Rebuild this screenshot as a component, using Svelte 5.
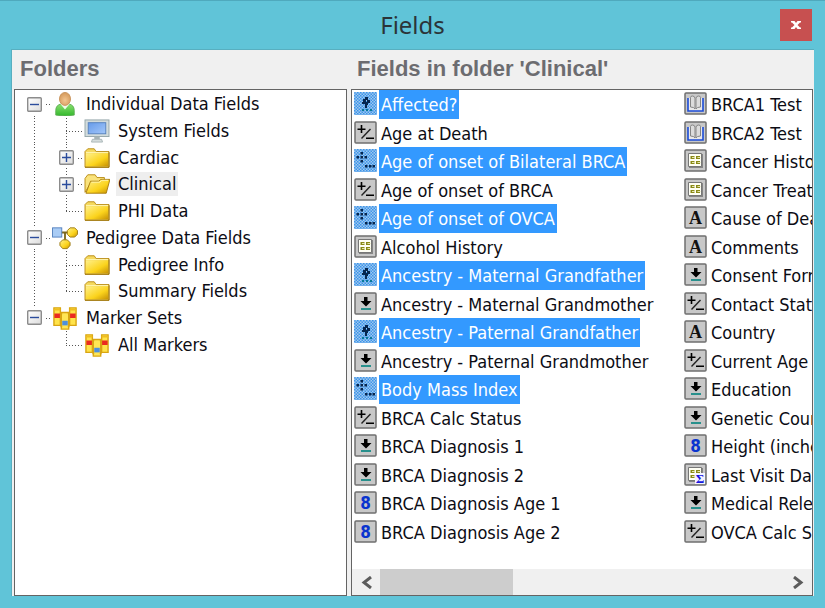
<script lang="ts">
  type TreeIcon = 'person' | 'monitor' | 'folder' | 'open' | 'pedigree' | 'markers';
  type FieldIcon = 'list' | 'calc' | 'number' | 'table' | 'text' | 'book' | 'summary';

  interface Node {
    name: string;
    icon: TreeIcon;
    expandable?: boolean;
    children?: Node[];
  }

  interface Field {
    name: string;
    icon: FieldIcon;
    selected?: boolean;
  }

  const folders: Node[] = [
    {
      name: 'Individual Data Fields',
      icon: 'person',
      children: [
        { name: 'System Fields', icon: 'monitor' },
        { name: 'Cardiac', icon: 'folder', expandable: true },
        { name: 'Clinical', icon: 'open', expandable: true },
        { name: 'PHI Data', icon: 'folder' },
      ],
    },
    {
      name: 'Pedigree Data Fields',
      icon: 'pedigree',
      children: [
        { name: 'Pedigree Info', icon: 'folder' },
        { name: 'Summary Fields', icon: 'folder' },
      ],
    },
    {
      name: 'Marker Sets',
      icon: 'markers',
      children: [{ name: 'All Markers', icon: 'markers' }],
    },
  ];

  let fields: Field[] = $state([
    { name: 'Affected?', icon: 'list', selected: true },
    { name: 'Age at Death', icon: 'calc' },
    { name: 'Age of onset of Bilateral BRCA', icon: 'calc', selected: true },
    { name: 'Age of onset of BRCA', icon: 'calc' },
    { name: 'Age of onset of OVCA', icon: 'calc', selected: true },
    { name: 'Alcohol History', icon: 'table' },
    { name: 'Ancestry - Maternal Grandfather', icon: 'list', selected: true },
    { name: 'Ancestry - Maternal Grandmother', icon: 'list' },
    { name: 'Ancestry - Paternal Grandfather', icon: 'list', selected: true },
    { name: 'Ancestry - Paternal Grandmother', icon: 'list' },
    { name: 'Body Mass Index', icon: 'calc', selected: true },
    { name: 'BRCA Calc Status', icon: 'calc' },
    { name: 'BRCA Diagnosis 1', icon: 'list' },
    { name: 'BRCA Diagnosis 2', icon: 'list' },
    { name: 'BRCA Diagnosis Age 1', icon: 'number' },
    { name: 'BRCA Diagnosis Age 2', icon: 'number' },
    { name: 'BRCA1 Test', icon: 'book' },
    { name: 'BRCA2 Test', icon: 'book' },
    { name: 'Cancer History', icon: 'table' },
    { name: 'Cancer Treatment', icon: 'table' },
    { name: 'Cause of Death', icon: 'text' },
    { name: 'Comments', icon: 'text' },
    { name: 'Consent Form', icon: 'list' },
    { name: 'Contact Status', icon: 'calc' },
    { name: 'Country', icon: 'text' },
    { name: 'Current Age', icon: 'calc' },
    { name: 'Education', icon: 'list' },
    { name: 'Genetic Counseling', icon: 'list' },
    { name: 'Height (inches)', icon: 'number' },
    { name: 'Last Visit Date', icon: 'summary' },
    { name: 'Medical Release', icon: 'list' },
    { name: 'OVCA Calc Status', icon: 'calc' },
  ]);

  let current = $state('Clinical');
  let list: HTMLElement;

  const scroll = (left: number) => list.scrollBy({ left });
</script>

{#snippet treeIcon(name: TreeIcon)}
  <svg class="tree-icon" viewBox="0 0 28 26" aria-hidden="true">
    {#if name === 'person'}
      <path d="M4 25v-5q0-6 6-7h8q6 1 6 7v5q-10 2-20 0z" fill="url(#green)" stroke="#5cae52" />
      <path d="M9 13l5 6 5-6z" fill="#eefbe8" />
      <ellipse cx="14" cy="7.500" rx="6" ry="7" fill="url(#skin)" stroke="#c9935a" />
    {:else if name === 'monitor'}
      <rect x="1" y="1" width="26" height="18" fill="#d3dcdc" stroke="#93a5a8" />
      <rect x="4.500" y="4" width="19" height="12" fill="url(#screen)" stroke="#5580bd" />
      <path d="M11 19h6v3h-6z" fill="#a7b4b6" />
      <path d="M9 22h10l1 3H8z" fill="#d5dddd" stroke="#a7b4b6" />
    {:else if name === 'folder'}
      <path d="M1 6l3-3h7l2 3h14v17H1z" fill="#f5d95d" stroke="#b78a13" />
      <path d="M2 8h24v14H2z" fill="url(#gold)" />
      <path d="M2 7h24" stroke="#fff5b5" />
      <path d="M27 7v16H1" fill="none" stroke="#987008" />
    {:else if name === 'open'}
      <path d="M1 22V7l3-4h8l2 3h8v5H8z" fill="#fae37c" stroke="#b78a13" />
      <path d="M7 10h9l2-2h10l-4 15H2z" fill="url(#gold)" stroke="#a77b0b" />
      <path d="M8 11h9l2-2h7" fill="none" stroke="#fff5b5" />
    {:else if name === 'pedigree'}
      <path d="M9 7h9M14 7v9" stroke="#7c671f" stroke-width="2" fill="none" />
      <rect x="0.500" y="2" width="10" height="10" fill="#a9ccf5" stroke="#527fbd" />
      <path d="M19.500 2h5L27.500 5v4l-3 3h-5l-3-3V5z" fill="url(#gold)" stroke="#9b7811" />
      <path d="M11.500 15h5l3 3v3l-3 3.500h-5l-3-3.500v-3z" fill="url(#gold)" stroke="#9b7811" />
    {:else}
      <path d="M2 2h7v19H2zM19 2h7v19h-7z" fill="#ffe34a" stroke="#d9a512" stroke-width="1.500" />
      <path d="M2 4h7M19 4h7" stroke="#f0bd20" stroke-width="2" />
      <path d="M10 7h8v18h-8z" fill="#ffe655" stroke="#d9a512" stroke-width="1.500" />
      <path d="M9 8h2M17 8h2M9 22h2M17 22h2" stroke="#d9a512" stroke-width="2" />
      <path d="M2.500 8h6v5h-6zM19.500 8h6v5h-6z" fill="#ea2a20" />
      <path d="M11 16h6v5h-6z" fill="#4e8fdc" />
    {/if}
  </svg>
{/snippet}

{#snippet fieldIcon(name: FieldIcon, selected: boolean)}
  <svg class="field-icon" viewBox="0 0 23 23" aria-hidden="true">
    <rect x="1" y="1" width="21" height="21" rx="1" fill="#c8c8c8" stroke="#6f6f6f" stroke-width="1.500" />
    {#if selected}
      <rect width="23" height="23" rx="1" fill="url(#dither)" />
    {/if}
    {#if name === 'list' && selected}
      <path
        d="M11 5h3v3h-3zM9 7h3v3H9zM13 8h3v3h-3zM8 10h3v2H8zM11 10h3v3h-3zM11 13h2v3h-2z"
        fill="#06264f"
      />
      <path d="M8 17h2v2H8zM12 17h2v2h-2zM16 17h2v2h-2z" fill="#08799a" />
    {:else if name === 'list'}
      <path d="M10 5h3.500v4h4l-5.500 5.500L6.500 9H10z" fill="#000" />
      <path d="M7 17h10" stroke="#00827e" stroke-width="1.600" />
    {:else if name === 'calc' && selected}
      <path
        d="M6.500 3h2.500v2.500H6.500zM2.500 7h2.500v2.500H2.500zM6.500 7h2.500v2.500H6.500zM10.500 7h2.500v2.500h-2.500zM6.500 11h2.500v2.500H6.500zM11 16h2.500v2.500H11zM15 16h2.500v2.500H15zM18.500 16h2.500v2.500h-2.500z"
        fill="#06264f"
      />
    {:else if name === 'calc'}
      <path d="M3.500 8.200h8M7.500 4v8M12 17.300h8" stroke="#000" stroke-width="1.600" />
      <path d="M16.500 8L7.500 17.500" stroke="#222" stroke-width="1.400" />
    {:else if name === 'number'}
      <text class="digit" x="11.500" y="17.500" text-anchor="middle">8</text>
    {:else if name === 'text'}
      <text class="letter" x="11.500" y="17.500" text-anchor="middle">A</text>
    {:else if name === 'book'}
      <path d="M4 6v13h15V6" fill="#e8e8e8" stroke="#1b4bd8" stroke-width="1.600" />
      <path
        d="M6.500 15V5.500q0-1.500 2-1.500t2.500 2v11q-1-2-4.500-2zM16.500 15V5.500q0-1.500-2-1.500T12 6v11q1-2 4.500-2z"
        fill="#dcdcdc"
        stroke="#858585"
      />
    {:else}
      <path d="M5 5h14v14H5z" fill="#858585" />
      <path d="M4.500 4.500h13v13h-13z" fill="#fffff4" stroke="#777" />
      <path d="M6.500 7h4v3h-4zM12 7h4v3h-4zM6.500 12h4v3h-4zM12 12h4v3h-4z" fill="#8a8a16" />
      <path d="M8 8.500h3M13.500 8.500h3M8 13.500h3M13.500 13.500h3" stroke="#e6e6b0" />
      {#if name === 'summary'}
        <path d="M11 10h10v11H11z" fill="#f3f3ff" />
        <text class="sigma" x="16" y="20" text-anchor="middle">Σ</text>
      {/if}
    {/if}
  </svg>
{/snippet}

{#snippet toggle(open: boolean, name: string)}
  <button class="toggle" aria-label="{open ? 'Collapse' : 'Expand'} {name}">
    <svg viewBox="0 0 15 15" aria-hidden="true">
      <rect x="0.700" y="0.700" width="13.600" height="13.600" rx="1" fill="url(#box)" stroke="#8c8c8c" stroke-width="1.400" />
      <path d={open ? 'M3 7.500h9' : 'M3 7.500h9M7.500 3v9'} stroke="#2b4c9c" stroke-width="1.400" />
    </svg>
  </button>
{/snippet}

{#snippet label(name: string)}
  <button class="folder" class:current={current === name} onclick={() => (current = name)}>
    {name}
  </button>
{/snippet}

<svg class="defs" aria-hidden="true">
  <defs>
    <linearGradient id="gold" x2="1" y2="1">
      <stop offset="0" stop-color="#fff08a" />
      <stop offset="0.6" stop-color="#fbd31c" />
      <stop offset="1" stop-color="#c79205" />
    </linearGradient>
    <linearGradient id="green" x2="0" y2="1">
      <stop offset="0" stop-color="#8be070" />
      <stop offset="1" stop-color="#32b82c" />
    </linearGradient>
    <radialGradient id="skin" cy="0.6">
      <stop offset="0" stop-color="#f3c590" />
      <stop offset="1" stop-color="#d9a062" />
    </radialGradient>
    <linearGradient id="screen" x2="1" y2="1">
      <stop offset="0" stop-color="#669bea" />
      <stop offset="1" stop-color="#a3c7fa" />
    </linearGradient>
    <linearGradient id="box" x2="1" y2="1">
      <stop offset="0" stop-color="#fff" />
      <stop offset="1" stop-color="#dcdcdc" />
    </linearGradient>
    <pattern id="dither" width="3" height="3" patternUnits="userSpaceOnUse">
      <rect width="3" height="3" fill="#9fc9ee" />
      <path d="M0 0h1.500v1.500H0zM1.500 1.500H3V3H1.500z" fill="#3d94ea" />
    </pattern>
  </defs>
</svg>

<div class="window">
  <header>
    <h1>Fields</h1>
    <button class="close" aria-label="Close">
      <svg viewBox="0 0 10 10" aria-hidden="true">
        <path d="M0 1h3.500l1.500 2 1.500-2H10v1.500H9L6.500 5 9 7.500h1V9H6.500L5 7 3.500 9H0V7.500h1L3.500 5 1 2.500H0z" fill="#fff" />
      </svg>
    </button>
  </header>

  <main>
    <section>
      <h2>Folders</h2>
      <div class="panel">
        <ul class="tree">
          {#each folders as folder, i}
            {@const last = i === folders.length - 1}
            <li>
              <span class="cell" class:up={i > 0} class:down={!last}>{@render toggle(true, folder.name)}</span>
              <span class="cell">{@render treeIcon(folder.icon)}</span>
              {@render label(folder.name)}
            </li>
            {#each folder.children ?? [] as child, j}
              <li>
                <span class="cell pass" class:up={!last} class:down={!last}></span>
                <span class="cell up" class:down={j < (folder.children?.length ?? 0) - 1}>
                  {#if child.expandable}{@render toggle(false, child.name)}{/if}
                </span>
                <span class="cell">{@render treeIcon(child.icon)}</span>
                {@render label(child.name)}
              </li>
            {/each}
          {/each}
        </ul>
      </div>
    </section>

    <section>
      <h2>Fields in folder 'Clinical'</h2>
      <div class="panel">
        <ul class="fields" bind:this={list}>
          {#each fields as field}
            <li>
              <button
                class="field"
                aria-pressed={!!field.selected}
                onclick={() => (field.selected = !field.selected)}
              >
                {@render fieldIcon(field.icon, !!field.selected)}
                <span>{field.name}</span>
              </button>
            </li>
          {/each}
        </ul>
        <div class="scrollbar">
          <button aria-label="Scroll left" onclick={() => scroll(-330)}>
            <svg viewBox="0 0 11 13" aria-hidden="true"><path d="M10 1L3 6.500 10 12" /></svg>
          </button>
          <div class="track"><div class="thumb"></div></div>
          <button aria-label="Scroll right" onclick={() => scroll(330)}>
            <svg viewBox="0 0 11 13" aria-hidden="true"><path d="M1 1l7 5.500L1 12" /></svg>
          </button>
        </div>
      </div>
    </section>
  </main>
</div>

<style>
  :global(body) {
    margin: 0;
  }

  .defs {
    position: absolute;
    width: 0;
    height: 0;
  }

  .window {
    display: flex;
    flex-direction: column;
    box-sizing: border-box;
    min-height: 100vh;
    padding: 0 11px 12px;
    border-top: 1px solid #4fa9bd;
    background: #60c4d8;
    color: #0c0c14;
    font: 18px/24px 'DejaVu Sans Condensed', Tahoma, sans-serif;
  }

  button {
    margin: 0;
    padding: 0;
    border: 0;
    background: none;
    color: inherit;
    font: inherit;
    text-align: left;
    white-space: nowrap;
  }

  ul {
    margin: 0;
    padding: 0;
    list-style: none;
  }

  svg {
    display: block;
    flex: none;
  }

  header {
    display: grid;
    grid-template-columns: 1fr auto 1fr;
    align-items: center;
    height: 48px;
  }

  h1 {
    grid-column: 2;
    margin: 0;
    color: #2b3438;
    font: 24px/32px 'Noto Sans', sans-serif;
  }

  .close {
    display: grid;
    place-items: center;
    justify-self: end;
    width: 32px;
    height: 32px;
    margin-right: 2px;
    background: #c75050;
  }

  .close svg {
    width: 10px;
    height: 10px;
  }

  main {
    display: grid;
    flex: 1;
    grid-template-columns: 333fr 462fr;
    gap: 4px;
    padding: 0 1px 0 2px;
    border: 1px solid #58afc0;
    border-width: 1px 0 0 1px;
    background: #f0f0f0;
  }

  section {
    display: flex;
    flex-direction: column;
    min-width: 0;
  }

  h2 {
    margin: 0;
    padding: 3px 6px 4px;
    color: #6c6c70;
    font: bold 22px/32px 'Liberation Sans', Arial, sans-serif;
  }

  .panel {
    display: flex;
    flex: 1;
    flex-direction: column;
    border: 1px solid #646464;
    background: #fff;
  }

  .tree {
    display: grid;
    grid-auto-rows: 1fr;
    min-height: 267px;
    padding: 1px 0 0 3px;
  }

  .tree li {
    display: flex;
    align-items: center;
  }

  .cell {
    --dots: #555 0 1px, transparent 1px 3px;

    display: flex;
    position: relative;
    align-items: center;
    align-self: stretch;
    justify-content: center;
    width: 32px;
  }

  .up::before,
  .down::before {
    content: '';
    position: absolute;
    inset: 0 auto 0 50%;
    width: 1px;
    background: repeating-linear-gradient(to bottom, var(--dots));
  }

  .up:not(.down)::before {
    bottom: 50%;
  }

  .down:not(.up)::before {
    top: 50%;
  }

  .up:not(.pass)::after,
  .down:not(.pass)::after {
    content: '';
    position: absolute;
    inset: 50% 0 auto 50%;
    height: 1px;
    background: repeating-linear-gradient(to right, var(--dots));
  }

  .toggle {
    z-index: 1;
    padding: 2px;
    background: #fff;
  }

  .toggle svg {
    width: 15px;
    height: 15px;
  }

  .tree-icon {
    z-index: 1;
    width: 26px;
    height: 24px;
    margin-right: 2px;
  }

  .folder {
    padding: 0 2px;
    margin-left: 2px;
  }

  .folder.current {
    background: #eee;
  }

  .fields {
    display: grid;
    flex: 1;
    grid-auto-columns: 330px;
    grid-auto-flow: column;
    grid-template-rows: repeat(16, 1fr);
    overflow: hidden;
    padding: 0 0 23px 2px;
  }

  .fields li {
    display: flex;
  }

  .field {
    display: flex;
    gap: 2px;
  }

  .field span {
    display: flex;
    align-items: center;
    align-self: stretch;
    padding: 2px 2px 0;
  }

  .field[aria-pressed='true'] span {
    background: #3399ff;
    color: #fff;
  }

  .field-icon {
    width: 23px;
    height: 23px;
    margin-top: 2px;
  }

  .digit {
    fill: #0a34cf;
    font: bold 17px 'DejaVu Sans Condensed', sans-serif;
  }

  .letter {
    fill: #111;
    font: bold 18px 'Liberation Serif', serif;
  }

  .sigma {
    fill: #1414e0;
    font: bold 13px 'Liberation Serif', serif;
  }

  .scrollbar {
    display: flex;
    height: 26px;
    background: #f0f0f0;
  }

  .scrollbar button {
    display: grid;
    place-items: center;
    width: 28px;
  }

  .scrollbar svg {
    width: 11px;
    height: 13px;
  }

  .scrollbar path {
    fill: none;
    stroke: #5c5c5c;
    stroke-width: 3;
  }

  .track {
    flex: 1;
  }

  .thumb {
    width: 33%;
    height: 100%;
    background: #cdcdcd;
  }
</style>
